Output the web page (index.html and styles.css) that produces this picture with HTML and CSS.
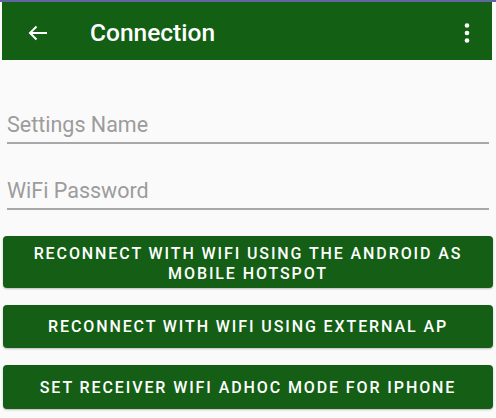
FILE: index.html
```html
<!DOCTYPE html>
<html>
<head>
<meta charset="utf-8">
<link rel="stylesheet" href="styles.css">
</head>
<body>
<div class="topline"></div>
<header class="toolbar">
  <svg class="back" width="20" height="16" viewBox="0 0 20 16"><path d="M19 8H2M8.5 1.5L2 8l6.5 6.5" fill="none" stroke="#fff" stroke-width="2"/></svg>
  <h1 class="title">Connection</h1>
  <svg class="more" width="6" height="20" viewBox="0 0 6 20"><circle cx="3" cy="2.5" r="2.3" fill="#fff"/><circle cx="3" cy="10" r="2.3" fill="#fff"/><circle cx="3" cy="17.5" r="2.3" fill="#fff"/></svg>
</header>
<main class="content">
  <div class="field field-first">Settings Name</div>
  <div class="field field-second">WiFi Password</div>
  <button class="btn btn-tall">RECONNECT WITH WIFI USING THE ANDROID AS<br>MOBILE HOTSPOT</button>
  <button class="btn btn-one">RECONNECT WITH WIFI USING EXTERNAL AP</button>
  <button class="btn btn-three">SET RECEIVER WIFI ADHOC MODE FOR IPHONE</button>
</main>
</body>
</html>
```
FILE: styles.css
```css
html, body {
  margin: 0;
  padding: 0;
  background: #fafafa;
  font-family: Roboto, "Liberation Sans", sans-serif;
  width: 496px;
  height: 418px;
  overflow: hidden;
}
.topline {
  height: 2px;
  background: #6266a0;
}
.toolbar {
  margin: 0 4px 0 2px;
  height: 58px;
  box-sizing: border-box;
  padding-top: 3px;
  background: #135f14;
  display: flex;
  align-items: center;
  color: #fff;
}
.back {
  margin-left: 26px;
  flex: none;
}
.title {
  margin: 0 0 0 42px;
  font-size: 24.5px;
  font-weight: 500;
  flex: 1;
  line-height: 28px;
}
.more {
  margin-right: 22px;
  flex: none;
}
.content {
  display: flex;
  flex-direction: column;
}
.field {
  margin: 0 7px;
  font-size: 21.5px;
  line-height: 24px;
  color: #9c9c9c;
  padding-bottom: 5px;
  border-bottom: 2px solid #a8a8a8;
}
.field-first {
  margin-top: 53px;
}
.field-second {
  margin-top: 35px;
}
.btn {
  margin: 0 3px;
  border: none;
  border-radius: 4px;
  background: #145f15;
  color: #fff;
  font-family: Roboto, "Liberation Sans", sans-serif;
  font-weight: 500;
  font-size: 16px;
  line-height: 20px;
  letter-spacing: 1.9px;
  box-shadow: 0 1px 2px rgba(0,0,0,0.25);
  padding: 0;
}
.btn-tall {
  margin-top: 26px;
  height: 52px;
  padding-top: 3px;
}
.btn-one {
  margin-top: 17px;
  height: 43px;
  padding-top: 1px;
}
.btn-three {
  margin-top: 17px;
  height: 44px;
  padding-top: 1px;
}
```
